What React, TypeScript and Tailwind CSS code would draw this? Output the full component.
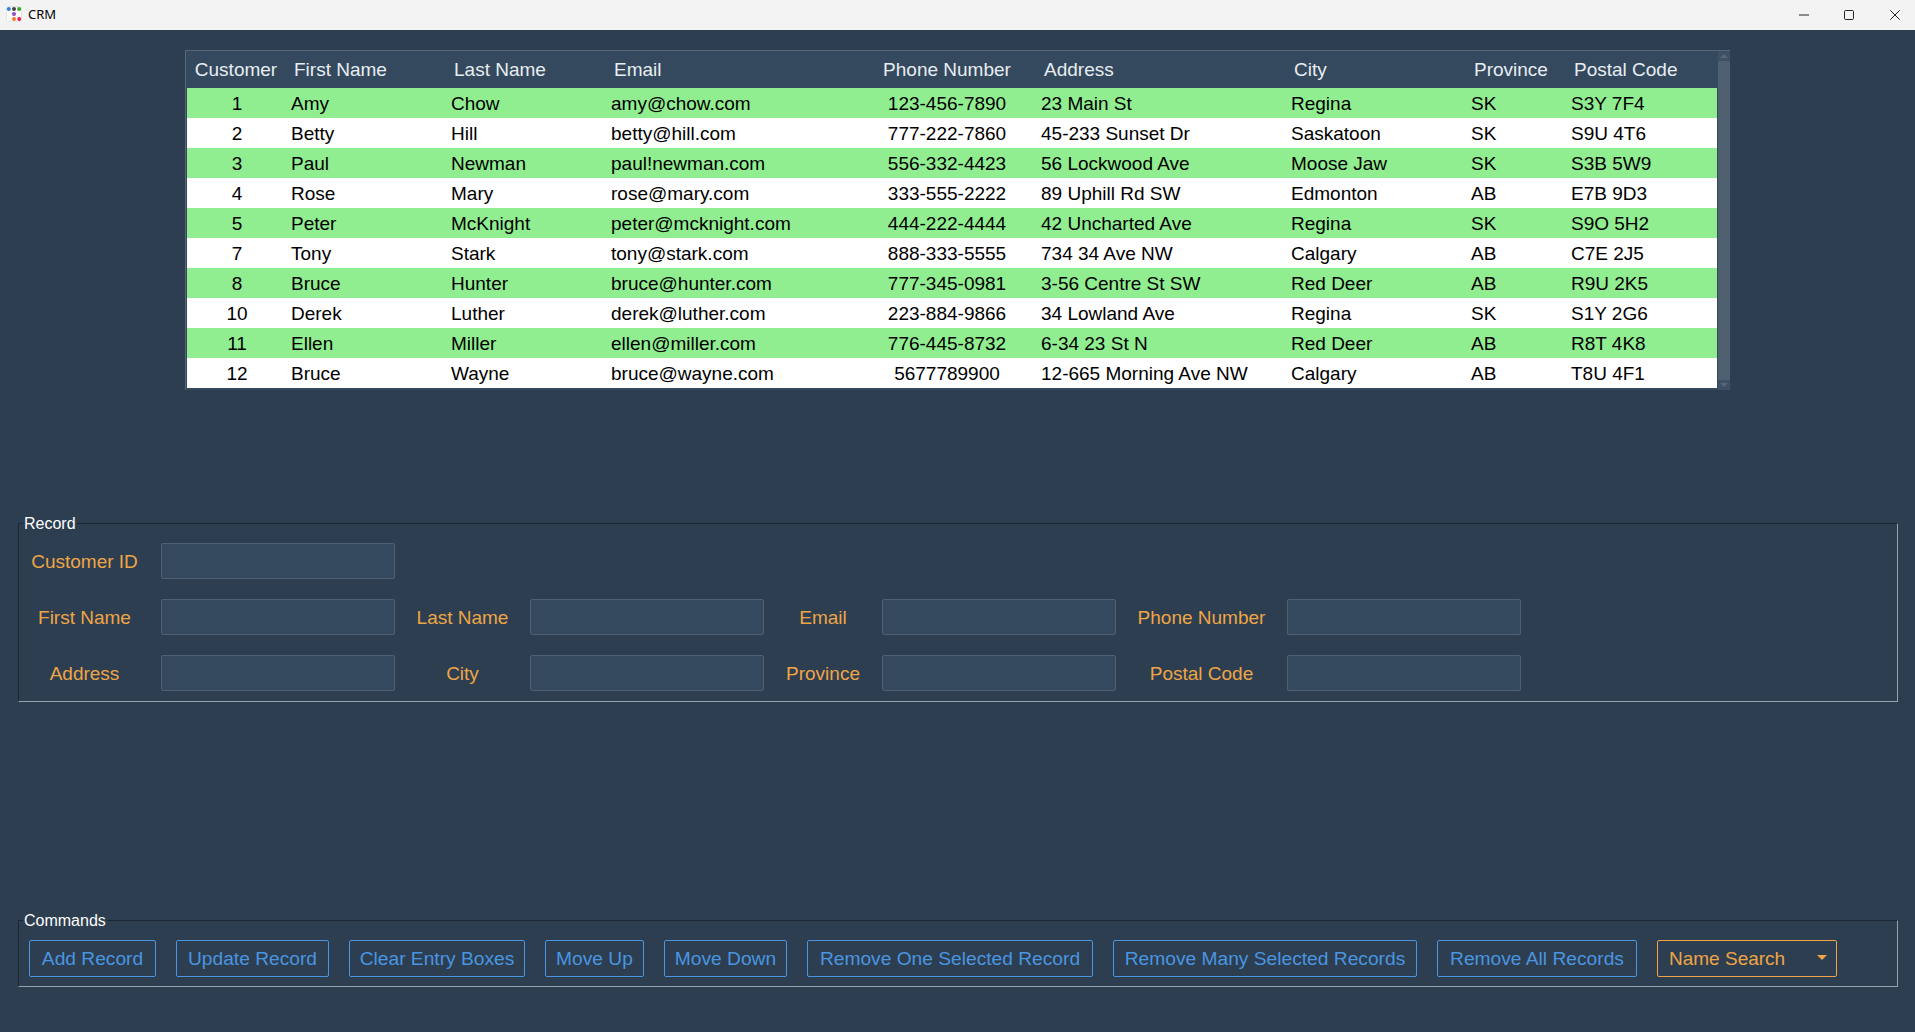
import React from 'react';

const customers = [
  ['1', 'Amy', 'Chow', 'amy@chow.com', '123-456-7890', '23 Main St', 'Regina', 'SK', 'S3Y 7F4'],
  ['2', 'Betty', 'Hill', 'betty@hill.com', '777-222-7860', '45-233 Sunset Dr', 'Saskatoon', 'SK', 'S9U 4T6'],
  ['3', 'Paul', 'Newman', 'paul!newman.com', '556-332-4423', '56 Lockwood Ave', 'Moose Jaw', 'SK', 'S3B 5W9'],
  ['4', 'Rose', 'Mary', 'rose@mary.com', '333-555-2222', '89 Uphill Rd SW', 'Edmonton', 'AB', 'E7B 9D3'],
  ['5', 'Peter', 'McKnight', 'peter@mcknight.com', '444-222-4444', '42 Uncharted Ave', 'Regina', 'SK', 'S9O 5H2'],
  ['7', 'Tony', 'Stark', 'tony@stark.com', '888-333-5555', '734 34 Ave NW', 'Calgary', 'AB', 'C7E 2J5'],
  ['8', 'Bruce', 'Hunter', 'bruce@hunter.com', '777-345-0981', '3-56 Centre St SW', 'Red Deer', 'AB', 'R9U 2K5'],
  ['10', 'Derek', 'Luther', 'derek@luther.com', '223-884-9866', '34 Lowland Ave', 'Regina', 'SK', 'S1Y 2G6'],
  ['11', 'Ellen', 'Miller', 'ellen@miller.com', '776-445-8732', '6-34 23 St N', 'Red Deer', 'AB', 'R8T 4K8'],
  ['12', 'Bruce', 'Wayne', 'bruce@wayne.com', '5677789900', '12-665 Morning Ave NW', 'Calgary', 'AB', 'T8U 4F1'],
];

const headers = ['Customer', 'First Name', 'Last Name', 'Email', 'Phone Number', 'Address', 'City', 'Province', 'Postal Code'];

const colWidths = ['w-[98px]', 'w-[160px]', 'w-[160px]', 'w-[254px]', 'w-[176px]', 'w-[250px]', 'w-[180px]', 'w-[100px]', 'w-[152px]'];

const commands = [
  { label: 'Add Record', width: 'w-[127px]' },
  { label: 'Update Record', width: 'w-[153px]' },
  { label: 'Clear Entry Boxes', width: 'w-[176px]' },
  { label: 'Move Up', width: 'w-[99px]' },
  { label: 'Move Down', width: 'w-[123px]' },
  { label: 'Remove One Selected Record', width: 'w-[286px]' },
  { label: 'Remove Many Selected Records', width: 'w-[304px]' },
  { label: 'Remove All Records', width: 'w-[200px]' },
];

const AppIcon = () => (
  <svg width="16" height="16" viewBox="0 0 16 16" className="mb-[2px]">
    <rect x="0.5" y="0.5" width="15" height="15" rx="1" fill="#fbfbfb" stroke="#e4e4e4" />
    <circle cx="2.8" cy="3" r="2" fill="#2f7fe0" />
    <circle cx="8" cy="3" r="2" fill="#444444" />
    <circle cx="13.2" cy="3" r="2" fill="#35a82e" />
    <circle cx="8" cy="8" r="2" fill="#8e4fc0" />
    <circle cx="8" cy="13" r="2" fill="#f5792a" />
    <circle cx="13.2" cy="13" r="2" fill="#e8204f" />
  </svg>
);

const TitleBar = () => (
  <div className="flex h-[30px] items-center bg-[#f3f3f3] pl-[6px] text-black">
    <AppIcon />
    <span className="ml-[6px] font-['Noto_Sans',sans-serif] text-[13px]">CRM</span>
    <div className="ml-auto flex items-center pb-[1px] pr-[15px]">
      <svg width="10" height="10" viewBox="0 0 10 10" className="mr-[35px]">
        <path d="M0 5h10" stroke="#222" strokeWidth="1" />
      </svg>
      <svg width="10" height="10" viewBox="0 0 10 10" className="mr-[36px]">
        <rect x="0.5" y="0.5" width="9" height="9" rx="1.2" fill="none" stroke="#222" strokeWidth="1" />
      </svg>
      <svg width="10" height="10" viewBox="0 0 10 10">
        <path d="M0.3 0.3l9.4 9.4M9.7 0.3l-9.4 9.4" stroke="#222" strokeWidth="1" />
      </svg>
    </div>
  </div>
);

const CustomerTable = () => (
  <div className="ml-[185px] mt-[20px] flex h-[340px] w-[1545px] border-l border-t border-[#56677a] bg-[#34495e]">
    <div className="ml-px h-[338px] w-[1530px]">
      <table className="w-full table-fixed border-collapse text-[19px]">
        <colgroup>
          {colWidths.map((w, i) => (
            <col key={i} className={w} />
          ))}
        </colgroup>
        <thead>
          <tr className="h-[37px] text-[#e8edf1]">
            {headers.map((h, i) => (
              <th
                key={h}
                className={`whitespace-nowrap p-0 pt-[2px] font-normal ${i === 0 || i === 4 ? 'text-center' : 'pl-[9px] text-left'}`}
              >
                {h}
              </th>
            ))}
          </tr>
        </thead>
        <tbody>
          {customers.map((row, r) => (
            <tr key={row[0]} className={`h-[30px] text-black ${r % 2 === 0 ? 'bg-[#90ee90]' : 'bg-white'}`}>
              {row.map((cell, i) => (
                <td
                  key={i}
                  className={`whitespace-nowrap p-0 leading-none ${i === 0 ? 'pl-[2px] text-center' : i === 4 ? 'text-center' : 'pl-[6px]'}`}
                >
                  {cell}
                </td>
              ))}
            </tr>
          ))}
        </tbody>
      </table>
    </div>
    <div className="ml-px flex h-[339px] w-[12px] flex-col bg-[#4f6070]">
      <div className="flex h-[10px] items-center justify-center bg-[#3d5064]">
        <div className="h-0 w-0 border-x-[4px] border-b-[4px] border-x-transparent border-b-[#56677a]" />
      </div>
      <div className="flex-1" />
      <div className="flex h-[10px] items-center justify-center bg-[#3d5064]">
        <div className="h-0 w-0 border-x-[4px] border-t-[4px] border-x-transparent border-t-[#56677a]" />
      </div>
    </div>
  </div>
);

const GroupBox = ({ title, className, children }: { title: string; className: string; children: React.ReactNode }) => (
  <div
    className={`relative ml-[18px] w-[1880px] border border-b-[#98a2ac] border-l-[#1c2733] border-r-[#98a2ac] border-t-[#1c2733] ${className}`}
  >
    <span className="absolute left-[4px] top-[-9px] bg-[#2c3e50] px-px text-[16px] leading-[18px] text-white">{title}</span>
    {children}
  </div>
);

const Field = ({ label, first }: { label: string; first?: boolean }) => (
  <>
    <div className={`pt-[2px] text-center text-[#efa546] ${first ? 'pr-[21px]' : ''}`}>{label}</div>
    <div className="h-[36px] rounded-[2px] border border-[#4f6073] bg-[#34495e]" />
  </>
);

const RecordForm = () => (
  <GroupBox title="Record" className="mt-[133px] h-[179px] pb-[10px] pl-[10px] pt-[19px]">
    <div className="grid grid-cols-[132px_234px_135px_234px_118px_234px_171px_234px] items-center gap-y-[20px] text-[19px]">
      <Field label="Customer ID" first />
      <div className="col-span-6" />
      <Field label="First Name" first />
      <Field label="Last Name" />
      <Field label="Email" />
      <Field label="Phone Number" />
      <Field label="Address" first />
      <Field label="City" />
      <Field label="Province" />
      <Field label="Postal Code" />
    </div>
  </GroupBox>
);

const Commands = () => (
  <GroupBox title="Commands" className="mt-[218px] h-[67px] pl-[10px] pt-[19px]">
    <div className="flex gap-[20px] text-[19.2px]">
      {commands.map(c => (
        <button
          key={c.label}
          className={`h-[37px] whitespace-nowrap rounded-[2px] border border-[#4a95e0] pt-[1px] text-center text-[#4a95e0] ${c.width}`}
        >
          {c.label}
        </button>
      ))}
      <div className="flex h-[37px] w-[180px] items-center justify-between rounded-[2px] border border-[#efa546] pl-[11px] pr-[9px] pt-[1px] text-[19px] text-[#efa546]">
        <span>Name Search</span>
        <div className="mb-[3px] h-0 w-0 border-x-[5px] border-t-[5px] border-x-transparent border-t-[#efa546]" />
      </div>
    </div>
  </GroupBox>
);

export default function App() {
  return (
    <div className="flex h-[1032px] w-[1915px] flex-col overflow-hidden bg-[#2c3e50] font-['Liberation_Sans',Arial,sans-serif]">
      <TitleBar />
      <CustomerTable />
      <RecordForm />
      <Commands />
    </div>
  );
}
